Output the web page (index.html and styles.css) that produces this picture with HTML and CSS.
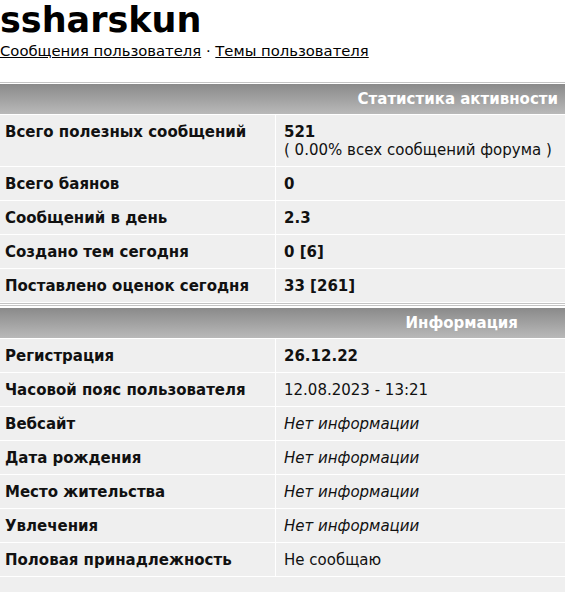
FILE: index.html
```html
<!DOCTYPE html>
<html lang="ru">
<head>
<meta charset="utf-8">
<title>ssharskun</title>
<link rel="stylesheet" href="styles.css">
</head>
<body>
<header class="profile-head">
  <h1 class="username">ssharskun</h1>
  <nav class="user-links">
    <a href="#">Сообщения пользователя</a> · <a href="#">Темы пользователя</a>
  </nav>
</header>

<section class="block block-first">
  <div class="block-title title-stats">Статистика активности</div>
  <div class="row">
    <div class="cell label">Всего полезных сообщений</div>
    <div class="cell value"><b>521</b><br>( 0.00% всех сообщений форума )</div>
  </div>
  <div class="row">
    <div class="cell label">Всего баянов</div>
    <div class="cell value"><b>0</b></div>
  </div>
  <div class="row">
    <div class="cell label">Сообщений в день</div>
    <div class="cell value"><b>2.3</b></div>
  </div>
  <div class="row">
    <div class="cell label">Создано тем сегодня</div>
    <div class="cell value"><b>0 [6]</b></div>
  </div>
  <div class="row">
    <div class="cell label">Поставлено оценок сегодня</div>
    <div class="cell value"><b>33 [261]</b></div>
  </div>
</section>

<section class="block block-next">
  <div class="block-title title-info">Информация</div>
  <div class="row">
    <div class="cell label">Регистрация</div>
    <div class="cell value"><b>26.12.22</b></div>
  </div>
  <div class="row">
    <div class="cell label">Часовой пояс пользователя</div>
    <div class="cell value">12.08.2023 - 13:21</div>
  </div>
  <div class="row">
    <div class="cell label">Вебсайт</div>
    <div class="cell value"><i>Нет информации</i></div>
  </div>
  <div class="row">
    <div class="cell label">Дата рождения</div>
    <div class="cell value"><i>Нет информации</i></div>
  </div>
  <div class="row">
    <div class="cell label">Место жительства</div>
    <div class="cell value"><i>Нет информации</i></div>
  </div>
  <div class="row">
    <div class="cell label">Увлечения</div>
    <div class="cell value"><i>Нет информации</i></div>
  </div>
  <div class="row">
    <div class="cell label">Половая принадлежность</div>
    <div class="cell value">Не сообщаю</div>
  </div>
  <div class="row row-empty">
    <div class="cell"></div>
  </div>
</section>
</body>
</html>
```

FILE: styles.css
```css
html, body {
  margin: 0;
  padding: 0;
  background: #ffffff;
}

body {
  font-family: "DejaVu Sans", Verdana, sans-serif;
  font-size: 15px;
  color: #111111;
}

.username {
  margin: 0;
  font-size: 35px;
  font-weight: bold;
  line-height: 40px;
  color: #000;
}

.user-links {
  font-size: 14.8px;
  line-height: 21px;
  color: #000;
}

.user-links a {
  color: #000;
  text-decoration: underline;
}

.block {
  background: #ffffff;
}

.block-first {
  margin-top: 21px;
  border-top: 1px solid #c4c4c4;
  padding-top: 1px;
}

.block-next {
  border-top: 1px solid #c4c4c4;
  padding-top: 4px;
  background: linear-gradient(to bottom, #ffffff 1px, #c4c4c4 1px, #c4c4c4 2px, #ffffff 2px) no-repeat;
  background-color: #ffffff;
}

.block-title {
  height: 30px;
  line-height: 30px;
  background: linear-gradient(#8a8a8a, #b9b9b9);
  color: #ffffff;
  font-weight: bold;
  text-align: right;
  border-bottom: 1px solid #ffffff;
}

.title-stats {
  padding-right: 7px;
}

.title-info {
  padding-right: 47px;
}

.row {
  display: grid;
  grid-template-columns: 275px 1fr;
  column-gap: 1px;
  border-bottom: 1px solid #ffffff;
}

.cell {
  background: #efefef;
  padding: 8px 5px 7px;
  line-height: 18px;
  min-height: 18px;
}

.label {
  font-weight: bold;
}

.value {
  padding-left: 8px;
}

.row-empty {
  grid-template-columns: 1fr;
}
```
